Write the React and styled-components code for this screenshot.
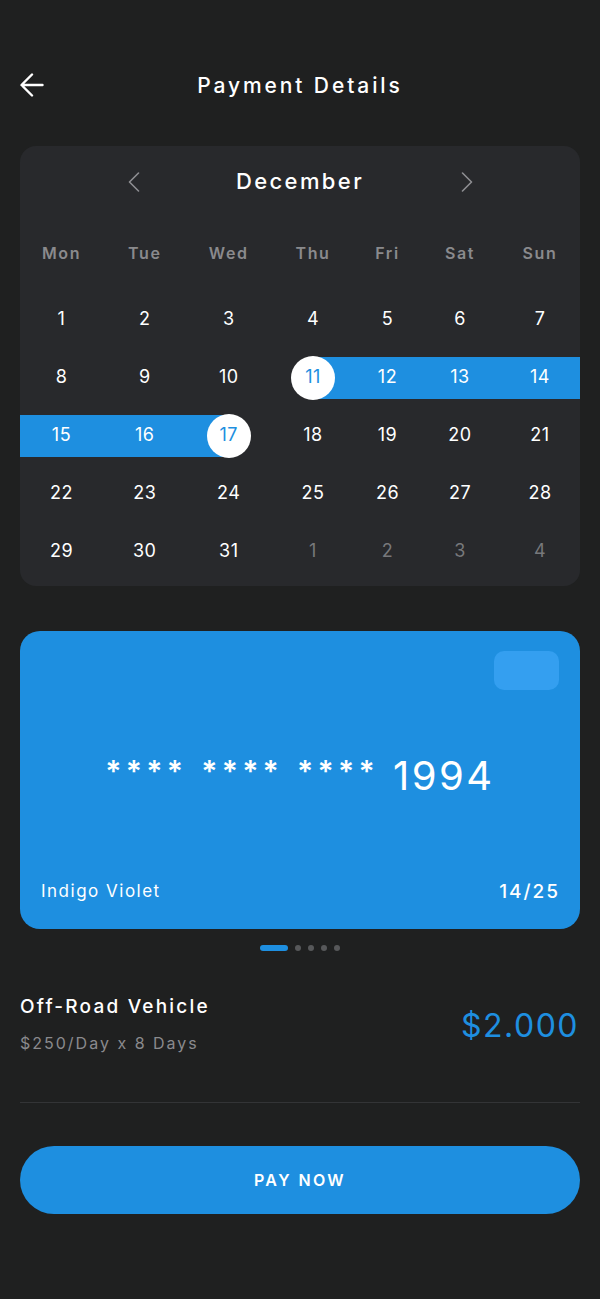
import React from 'react';
import styled, { createGlobalStyle } from 'styled-components';

const GlobalStyle = createGlobalStyle`
  * { box-sizing: border-box; }
  body {
    margin: 0;
    background: #1f2020;
    font-family: Inter, Roboto, "Liberation Sans", sans-serif;
    color: #ffffff;
  }
`;

const BLUE = '#1e8fe0';

const Page = styled.div`
  width: 600px;
  min-height: 1299px;
  padding: 60px 20px 0;
`;

const Header = styled.div`
  position: relative;
  height: 50px;
  display: flex;
  align-items: center;
  justify-content: center;
`;

const BackButton = styled.button`
  position: absolute;
  left: 0;
  top: 13px;
  width: 24px;
  height: 24px;
  padding: 0;
  border: none;
  background: none;
  cursor: pointer;
`;

const Title = styled.h1`
  margin: 0;
  font-size: 21px;
  font-weight: 500;
  letter-spacing: 2.9px;
`;

const Calendar = styled.div`
  margin-top: 36px;
  background: #28292c;
  border-radius: 16px;
  padding-bottom: 7px;
  overflow: hidden;
`;

const MonthRow = styled.div`
  height: 71px;
  display: flex;
  align-items: center;
  justify-content: center;
  gap: 80px;
`;

const Chevron = styled.button`
  width: 24px;
  height: 24px;
  padding: 0;
  border: none;
  background: none;
  display: flex;
  align-items: center;
  justify-content: center;
  cursor: pointer;
`;

const Month = styled.span`
  width: 149px;
  text-align: center;
  font-size: 22px;
  font-weight: 500;
  letter-spacing: 2.4px;
  padding-bottom: 2px;
`;

const Grid = styled.div`
  display: grid;
  grid-template-columns: 83px 83.5px 84.5px 84px 65px 80px 80px;
`;

const WeekDay = styled.div`
  height: 72px;
  display: flex;
  align-items: center;
  justify-content: center;
  font-size: 16px;
  font-weight: 600;
  letter-spacing: 1.6px;
  color: #8a8a8d;
`;

const Cell = styled.div`
  height: 58px;
  display: flex;
  align-items: center;
  padding-top: 3px;
`;

const bandBg = (range) => {
  if (range === 'start') return `linear-gradient(to right, transparent 50%, ${BLUE} 50%)`;
  if (range === 'end') return `linear-gradient(to right, ${BLUE} 50%, transparent 50%)`;
  if (range === 'mid') return BLUE;
  return 'transparent';
};

const Band = styled.div`
  width: 100%;
  height: 42px;
  display: flex;
  align-items: center;
  justify-content: center;
  background: ${(p) => bandBg(p.$range)};
`;

const Day = styled.span`
  width: 44px;
  height: 44px;
  flex: none;
  border-radius: 50%;
  display: flex;
  align-items: center;
  justify-content: center;
  padding-bottom: 3px;
  font-size: 18px;
  letter-spacing: 0.5px;
  background: ${(p) => (p.$edge ? '#ffffff' : 'transparent')};
  color: ${(p) => (p.$edge ? BLUE : p.$muted ? '#77787b' : '#ffffff')};
`;

const CreditCard = styled.div`
  margin-top: 45px;
  height: 298px;
  background: ${BLUE};
  border-radius: 20px;
  padding: 20px 21px 26px;
  display: flex;
  flex-direction: column;
`;

const Chip = styled.div`
  align-self: flex-end;
  width: 65px;
  height: 39px;
  border-radius: 10px;
  background: #349ff0;
`;

const NumberRow = styled.div`
  flex: 1;
  display: flex;
  align-items: center;
  justify-content: center;
  gap: 14px;
  padding-bottom: 19px;
`;

const Stars = styled.span`
  font-size: 30px;
  font-weight: 600;
  letter-spacing: 4.3px;
  word-spacing: 2px;
  transform: translateY(-4px);
`;

const LastDigits = styled.span`
  font-size: 40px;
  letter-spacing: 2.5px;
`;

const CardFooter = styled.div`
  height: 24px;
  display: flex;
  align-items: center;
  justify-content: space-between;
`;

const Holder = styled.span`
  font-size: 17px;
  letter-spacing: 1.5px;
`;

const Expiry = styled.span`
  font-size: 19px;
  font-weight: 500;
  letter-spacing: 2px;
  margin-right: -1px;
`;

const Dots = styled.div`
  margin-top: 16px;
  display: flex;
  justify-content: center;
  align-items: center;
  gap: 7px;
`;

const Dot = styled.span`
  width: ${(p) => (p.$active ? '28px' : '6px')};
  height: 6px;
  border-radius: 3px;
  background: ${(p) => (p.$active ? BLUE : '#57585a')};
`;

const Summary = styled.div`
  margin-top: 44px;
  display: flex;
  align-items: center;
  justify-content: space-between;
`;

const Info = styled.div`
  display: flex;
  flex-direction: column;
  gap: 12px;
`;

const Product = styled.span`
  font-size: 19px;
  font-weight: 500;
  line-height: 24px;
  letter-spacing: 2.2px;
`;

const Rate = styled.span`
  font-size: 16px;
  line-height: 24px;
  letter-spacing: 2px;
  color: #8a8a8d;
`;

const Price = styled.span`
  font-size: 32px;
  letter-spacing: 1.5px;
  color: ${BLUE};
  margin-right: 1px;
`;

const Divider = styled.hr`
  margin: 47px 0 0;
  border: none;
  height: 1px;
  background: #333436;
`;

const PayButton = styled.button`
  margin-top: 43px;
  width: 100%;
  height: 68px;
  border: none;
  border-radius: 34px;
  background: ${BLUE};
  color: #ffffff;
  font-family: inherit;
  font-size: 16px;
  font-weight: 600;
  letter-spacing: 2.4px;
  cursor: pointer;
`;

const weekDays = ['Mon', 'Tue', 'Wed', 'Thu', 'Fri', 'Sat', 'Sun'];

const days = [
  ...Array.from({ length: 31 }, (_, i) => ({ n: i + 1 })),
  ...[1, 2, 3, 4].map((n) => ({ n, muted: true })),
];

const rangeOf = (d) => {
  if (d.muted) return null;
  if (d.n === 11) return 'start';
  if (d.n === 17) return 'end';
  if (d.n > 11 && d.n < 17) return 'mid';
  return null;
};

const ChevronIcon = ({ dir }) => (
  <svg width="12" height="20" viewBox="0 0 12 20" fill="none">
    <path
      d={dir === 'left' ? 'M10.5 1 L1.5 10 L10.5 19' : 'M1.5 1 L10.5 10 L1.5 19'}
      stroke="#8e8e92"
      strokeWidth="1.6"
      strokeLinecap="round"
      strokeLinejoin="round"
    />
  </svg>
);

export default function App() {
  return (
    <Page>
      <GlobalStyle />
      <Header>
        <BackButton aria-label="Back">
          <svg width="24" height="24" viewBox="0 0 24 24" fill="none">
            <path
              d="M22.5 12 H1.8 M12 1.5 L1.5 12 L12 22.5"
              stroke="#ffffff"
              strokeWidth="2.4"
              strokeLinecap="round"
              strokeLinejoin="round"
            />
          </svg>
        </BackButton>
        <Title>Payment Details</Title>
      </Header>

      <Calendar>
        <MonthRow>
          <Chevron aria-label="Previous month">
            <ChevronIcon dir="left" />
          </Chevron>
          <Month>December</Month>
          <Chevron aria-label="Next month">
            <ChevronIcon dir="right" />
          </Chevron>
        </MonthRow>
        <Grid>
          {weekDays.map((w) => (
            <WeekDay key={w}>{w}</WeekDay>
          ))}
          {days.map((d, i) => {
            const range = rangeOf(d);
            return (
              <Cell key={i}>
                <Band $range={range}>
                  <Day $edge={range === 'start' || range === 'end'} $muted={d.muted}>
                    {d.n}
                  </Day>
                </Band>
              </Cell>
            );
          })}
        </Grid>
      </Calendar>

      <CreditCard>
        <Chip />
        <NumberRow>
          <Stars>**** **** ****</Stars>
          <LastDigits>1994</LastDigits>
        </NumberRow>
        <CardFooter>
          <Holder>Indigo Violet</Holder>
          <Expiry>14/25</Expiry>
        </CardFooter>
      </CreditCard>

      <Dots>
        <Dot $active />
        <Dot />
        <Dot />
        <Dot />
        <Dot />
      </Dots>

      <Summary>
        <Info>
          <Product>Off-Road Vehicle</Product>
          <Rate>$250/Day x 8 Days</Rate>
        </Info>
        <Price>$2.000</Price>
      </Summary>

      <Divider />

      <PayButton>PAY NOW</PayButton>
    </Page>
  );
}
